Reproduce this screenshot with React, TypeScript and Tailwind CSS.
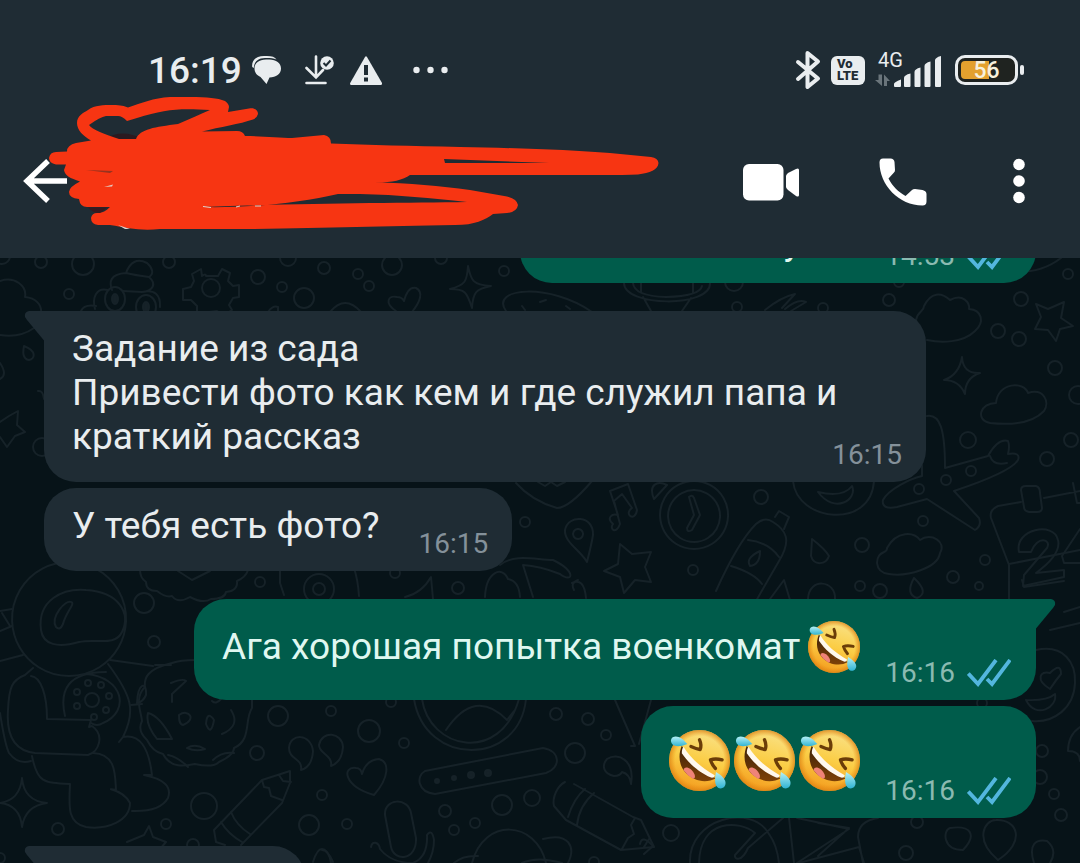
import React from "react";

const DOTS: [number, number, number][] = [
  [41, 262, 6], [83, 264, 11], [169, 262, 6], [69, 294, 5], [258, 277, 7], [282, 287, 5], [304, 298, 10],
  [288, 258, 8], [324, 268, 6], [358, 274, 5], [2, 256, 8], [42, 447, 9], [392, 265, 10], [441, 258, 6],
  [504, 271, 5], [369, 286, 5],
  [734, 282, 9], [737, 307, 5], [823, 308, 5], [889, 300, 6], [899, 282, 5], [1021, 299, 7], [1068, 274, 5],
  [998, 331, 7], [1019, 339, 7], [1055, 368, 7], [968, 440, 8], [1071, 440, 7], [1047, 459, 7],
  [761, 497, 7], [525, 522, 5], [693, 570, 5], [923, 521, 5], [862, 545, 7], [985, 560, 5], [953, 577, 6],
  [860, 586, 5], [880, 591, 7], [979, 586, 4], [971, 471, 5], [946, 480, 5], [919, 489, 5], [1078, 395, 9],
  [458, 588, 6], [395, 573, 5], [319, 589, 15], [319, 589, 6],
  [144, 603, 10], [154, 642, 6], [260, 582, 5], [278, 716, 10], [331, 711, 5], [257, 753, 7], [204, 806, 13],
  [322, 795, 5], [309, 825, 10], [347, 824, 5], [58, 829, 6], [166, 824, 5], [193, 845, 6], [0, 858, 5],
  [369, 731, 11], [391, 702, 5], [404, 743, 5], [556, 714, 6], [588, 719, 6], [606, 735, 5],
  [575, 753, 10], [532, 798, 8], [502, 805, 10], [445, 811, 6], [475, 823, 5], [454, 830, 5],
  [671, 833, 8], [594, 862, 5], [1042, 751, 6], [1040, 777, 7], [1054, 794, 5], [1061, 815, 6],
  [917, 822, 6], [906, 853, 7], [982, 703, 5],
];

const DOODLES = [
  // cloud, swirl and gear, top left
  "M0 281C15 276 27 286 25 297C36 298 42 305 41 313M0 335Q20 338 34 328",
  "M126 273C130 262 137 258 147 263C153 268 154 274 149 277C141 276 134 275 126 273C110 274 109 282 112 290M149 277C157 284 153 291 142 292L123 291M95 309C92 298 96 287 108 290M142 292Q161 288 160 307M81 311Q84 304 96 306",
  "M201 269l1 7q4-3 4 0c4 0 8 0 12 0l4-7 8 4-2 8 5 5 6-1v12l-6 1-4 7 3 5-8 5-7-4-8 1-4 5-8-4v-7l-6-6-8 0v-11l8-2 3-6-2-7z",
  "M24 346C37 351 35 359 29 360C22 359 23 351 24 346M0 363Q8 375 0 379M38 391q5-1 6 8M0 422L9 416L18 411L17 425L25 432L15 436L7 447L0 437",
  "M268 312q5-7 10-5v6M330 312Q345 294 361 312",
  // heart and sparkle
  "M396 311C384 303 388 295 397 297Q402 297 404 301Q408 286 416 288C424 292 420 302 412 312",
  "M468 266C471 280 472 285 491 286C476 289 473 292 472 308C467 292 465 289 450 289C465 285 467 282 468 266",
  "M506 311C489 287 551 283 592 312M522 306l3 4M540 302l6-2M566 306l4 3",
  // planter, fork
  "M624 283C624 307 711 308 710 283M633 283Q634 296 666 297Q700 296 702 286M643 297L651 311M691 298L682 311M641 283v9M693 283v10",
  "M765 310Q781 297 795 294L782 308M785 309Q798 298 806 302L791 311",
  // right side clouds, star, sparkle
  "M916 320C918 310 924 312 924 306C931 292 941 292 950 300C963 293 970 303 969 309C982 310 985 322 975 331C963 343 941 343 927 340",
  "M1036 304L1048 309L1064 302L1061 318L1073 326L1060 329L1056 341L1048 330L1035 329L1041 317Z",
  "M962 357Q963 374 980 373Q965 378 965 394Q959 380 944 380Q959 375 962 357",
  "M990 423C975 420 980 403 996 403C998 382 1024 381 1028 393C1044 388 1050 402 1044 411C1032 424 1009 425 990 423",
  "M1030 262l-12 10q25 0 43-14",
  // plane
  "M927 416C940 414 945 429 945 468L988 456Q998 438 1008 441Q1010 446 1008 454Q1021 452 1018 460Q1011 472 954 491L979 518Q982 526 975 530L927 499L897 507Q881 510 883 500C888 490 909 479 922 476V465M990 456q3 10 17 7",
  // calendar
  "M1080 491L1044 498M1021 502L998 506Q989 510 991 518L1009 565V600M1009 564L1080 550M1021 490q0-4 5-4h10q4 1 4 7l2 15q0 4-5 4h-8q-5-1-5-5zM1073 483l4 20h5",
  "M1019 552C1014 529 1054 521 1058 540C1061 552 1047 565 1036 573L1064 570V577L1023 586L1024 575L1047 548C1052 539 1037 535 1031 552ZM1080 529L1062 556L1064 563H1080",
  // smiley, heart, notes, alarm clock
  "M793 481C797 522 871 530 874 481M818 492Q843 498 852 486C858 499 835 515 818 492",
  "M516 483Q532 501 557 508Q569 508 592 481M538 482l7 4 6-4 6 4 8-4",
  "M613 524C606 518 612 513 618 515L610 491L628 484L637 510C635 523 623 514 632 508L622 494L614 501L620 524C616 535 609 529 613 524M654 499C648 485 657 480 667 485Z",
  "M694 481a34 34 0 1 0 .1 0M694 490a26 26 0 1 0 .1 0M689 497q3-3 5 1l6 17-8 15q-5 3-5-2l7-13z",
  // pin, star, bottle, drops
  "M587 562C580 550 564 542 565 530C568 514 594 515 593 535Q592 542 587 562M578 529a5 5 0 1 0 .1 0",
  "M620 544L632 554L651 552L645 567L651 582L635 580L624 593L620 577L604 571L618 564Z",
  "M716 591Q738 542 756 524Q765 516 773 522C786 530 792 540 779 561L756 601M748 540Q768 542 779 557M731 566Q754 573 762 584M775 517l4-6 10 6-5 12M750 566Q745 558 760 551Q760 565 750 566",
  "M812 539Q825 549 829 556C826 565 814 566 811 556ZM770 599l14-19 6 20M808 599C809 577 836 580 835 599M914 578Q930 593 917 598Q905 594 914 578",
  "M877 563C877 550 888 554 887 548C897 530 914 532 920 540C931 532 947 542 940 553C938 568 907 577 889 574Q878 573 877 563",
  // whale
  "M500 565C515 553 536 560 553 560C577 571 573 584 560 574Q540 566 523 565L533 597M485 597C486 572 502 565 508 579Q519 581 520 597M572 583q12-6 14 15M578 580q-8 3-4 10",
  // astronaut
  "M69 562a57 57 0 1 0 .1 0M41 630C37 600 63 588 86 590C119 592 131 613 122 632C115 647 96 638 79 642C58 648 43 645 41 630M56 627C50 617 66 599 71 602C76 603 66 612 63 624Q60 631 56 627",
  "M0 611l12-2M2 613l8 13M0 631l12-5M0 661l23-6M33 668L25 675C12 680 9 687 8 710C6 738 16 751 35 753L88 755C99 752 105 735 92 726L89 727L91 720L47 719C47 695 41 677 31 676M0 713Q5 745 9 753Q18 765 31 761",
  "M108 664C132 696 136 711 123 737L119 742M123 737Q147 732 152 775H144Q174 781 168 798Q160 812 132 811M106 672C68 672 59 690 65 716M86 674C123 677 131 711 103 723Q97 727 91 723M93 753C116 754 115 774 116 790C101 788 123 789 130 803C130 821 107 830 86 827C67 823 69 806 70 784C43 783 37 782 32 756",
  "M110 660L153 666M131 705L142 704",
  // flower badge and bitten donut
  "M140 570Q140 578 146 582Q146 591 157 591Q166 598 172 596Q178 604 190 597Q203 604 211 599Q225 599 226 592Q238 591 237 581Q246 577 248 570M178 571l14 9 18-9",
  "M172 663C146 669 144 679 145 687C134 698 141 711 142 721Q137 731 147 740Q153 752 163 754C171 769 185 766 195 764Q213 768 219 762Q234 755 234 748C252 740 244 720 252 708V698M172 663Q180 660 196 660",
  "M137 703C138 682 147 681 146 695Q143 702 137 703M155 665h16M148 713q12 3 24 26h-15Q145 724 148 713M179 715c10-7 18 5 4 10-4-1-4-6-4-10M206 724Q207 710 214 720Q211 737 206 724M231 710q10 16-9 24M187 748Q195 743 205 749Q196 752 187 748M171 683q12-5 15-2l-14 13v8M168 755q10 2 20 12M213 760q9-9 21-7M212 701q4 4 9-2",
  // lower left sparkle, pencil, quotes, heart
  "M22 778Q24 801 47 803Q25 806 22 827Q20 805 0 803Q20 800 22 778",
  "M262 780L290 771V783L282 803L241 845M262 780L214 830L216 842L225 845M262 780L264 787L269 788L271 796L282 800M231 812Q236 825 250 834M221 822Q228 834 242 842M279 775l4 6 8 1",
  "M301 770C303 758 289 760 289 748C290 733 311 733 313 751Q312 767 301 770M331 766C333 755 319 754 319 745C322 730 342 732 343 747Q342 762 331 766",
  "M374 795C343 786 342 766 356 768Q361 768 362 774Q366 760 379 759C390 762 389 778 374 795",
  "M127 842L144 835L149 826L153 837L166 842L160 849M313 862q8-26 20 0",
  // compass and remote
  "M414 699C425 767 519 767 526 699M422 699C429 749 500 765 519 699M446 730Q475 687 507 720M507 720L514 711",
  "M425 771L543 748C561 751 561 768 546 773L435 794C417 792 416 776 425 771M615 700l20 46h-4M651 700l-12 44",
  "M631 784C635 760 618 752 607 759C601 766 604 774 614 776Q620 776 622 772Q630 774 631 784",
  // microphone
  "M385 815C384 798 408 797 411 813L416 838C417 861 394 862 391 847ZM371 847C372 840 379 842 380 849Q391 863 413 863Q428 857 427 835Q432 828 434 840Q434 852 428 863M322 850q7 0 9 13",
  // crayon, hat
  "M565 782C557 786 552 798 554 806L566 820L621 850L654 847L641 820L633 817L574 784M622 849L628 838L634 834L631 825L635 818M644 847l5-8M585 789Q574 798 568 817M594 793Q579 806 577 825",
  "M472 863C484 817 536 820 546 863M454 863q9-8 24-7M522 863q15-7 40 0M543 839C569 832 576 847 568 863",
  // bike, cube
  "M690 863C688 818 752 803 769 834Q777 845 779 863M699 863C700 818 740 820 755 833L735 855C734 860 742 862 748 848L783 818M789 818l5 45M797 818L849 829L797 863M799 863L859 847L864 863M818 823l31 5-31 28M878 818q-20 3-20 19l5 26",
  "M963 850C942 850 943 830 950 828C970 825 978 834 963 850M998 860C974 840 984 820 996 820C1018 819 1026 842 998 860M1034 863C1028 844 1036 839 1047 841Q1058 850 1050 863M1080 727q-12 8-12 24 12 0 12 10",
  // love smiley
  "M1036 650C1064 644 1076 663 1075 683C1074 708 1054 723 1032 721M1050 689C1035 680 1040 670 1050 673Q1061 662 1061 674Q1056 680 1050 689M1026 700Q1047 701 1055 694C1058 707 1036 720 1026 700",
  "M1009 581v16M1022 580l2 7 40-6M1064 612l16-5M1050 630l30-7M640 844q2-10 13 2l-9 8",
  "M280 568v15l4 12M354 568q4 12 5 28M405 597q17-4 26-20l2 22",
];

function Wallpaper() {
  return (
    <svg
      className="absolute top-0 left-0 h-[605px] w-[1080px]"
      viewBox="0 258 1080 605"
      fill="none"
      stroke="#162228"
      strokeWidth="2"
      strokeLinecap="round"
      strokeLinejoin="round"
      aria-hidden="true"
    >
      {DOODLES.map((d, i) => (
        <path key={i} d={d} />
      ))}
      {DOTS.map(([x, y, r], i) => (
        <circle key={i} cx={x} cy={y} r={r} />
      ))}
      <circle cx="211" cy="288" r="9" />
      <ellipse cx="115" cy="299" rx="10" ry="12" />
      <ellipse cx="146" cy="307" rx="10" ry="12" />
      <g fill="#162228">
        <ellipse cx="115" cy="299" rx="3" ry="5" />
        <ellipse cx="146" cy="307" rx="3" ry="5" />
        <circle cx="437" cy="781" r="2" />
        <circle cx="454" cy="778" r="2" />
        <circle cx="471" cy="775" r="3" />
        <circle cx="488" cy="773" r="3" />
      </g>
      <circle cx="92" cy="700" r="7" />
      {[[77, 692], [88, 683], [101, 685], [109, 696], [106, 710], [94, 717], [77, 706]].map(([x, y]) => (
        <circle key={x + "-" + y} cx={x} cy={y} r="3" />
      ))}
    </svg>
  );
}

function Ticks() {
  return (
    <svg className="h-7 w-11 shrink-0" viewBox="0 0 44 28" fill="none" stroke="#53b6de" strokeWidth="3.8" role="img" aria-label="Прочитано">
      <path d="M1.300 14.500L11 25L29 1" />
      <path d="M20 20L25 25L43 1" />
    </svg>
  );
}

function Laugh({ className }: { className: string }) {
  return (
    <svg className={className} viewBox="0 0 100 100" role="img" aria-label="🤣">
      <defs>
        <linearGradient id="face" x1="0.65" y1="0" x2="0.35" y2="1">
          <stop offset="0" stopColor="#f9e287" />
          <stop offset="0.5" stopColor="#fbcd45" />
          <stop offset="1" stopColor="#f39a1d" />
        </linearGradient>
        <radialGradient id="rim" cx="0.5" cy="0.5" r="0.5">
          <stop offset="0.8" stopColor="#e88a10" stopOpacity="0" />
          <stop offset="1" stopColor="#d97f13" stopOpacity="0.75" />
        </radialGradient>
        <linearGradient id="tear" x1="0" y1="0" x2="0" y2="1">
          <stop offset="0" stopColor="#b5f0f5" />
          <stop offset="1" stopColor="#30b4d3" />
        </linearGradient>
        <linearGradient id="mouth" x1="0" y1="0" x2="0" y2="1">
          <stop offset="0" stopColor="#3e2208" />
          <stop offset="1" stopColor="#7d4108" />
        </linearGradient>
      </defs>
      <circle cx="50" cy="50" r="50" fill="url(#face)" />
      <circle cx="50" cy="50" r="50" fill="url(#rim)" />
      <path d="M21 26C14 42 17 60 28 71C41 84 61 88 77 79C56 71 37 52 21 26Z" fill="url(#mouth)" />
      <path d="M24 66C24 58 37 61 42 73Q44 80 39 80Q30 75 24 66Z" fill="#ef8378" />
      <path d="M24 28C35 46 53 62 75 74Q74 79 69 78C49 70 32 54 21 38Q21 30 24 28Z" fill="#fff8ed" />
      <path d="M36 27Q45 31 51 32Q54 25 50 16" fill="none" stroke="#6b3d08" strokeWidth="5.500" strokeLinecap="round" strokeLinejoin="round" />
      <path d="M87 49Q76 46 68 49Q70 56 76 63" fill="none" stroke="#6b3d08" strokeWidth="5.500" strokeLinecap="round" strokeLinejoin="round" />
      <path d="M30 23C22 13 13 8 6 12C1 16 3 24 10 26Q18 28 30 23Z" fill="url(#tear)" />
      <path d="M77 69C75 80 74 91 81 95C88 98 95 91 92 83Q88 75 77 69Z" fill="url(#tear)" />
    </svg>
  );
}

function Tail({ side }: { side: "in" | "out" }) {
  return side === "in" ? (
    <svg className="absolute top-0 right-full h-[30px] w-5" viewBox="0 0 20 30" fill="#1f2c34" aria-hidden="true">
      <path d="M20 0H5Q0 1 1 6L3 9L20 29.500Z" />
    </svg>
  ) : (
    <svg className="absolute top-0 left-full h-[30px] w-5" viewBox="0 0 20 30" fill="#005c4b" aria-hidden="true">
      <path d="M0 0H15Q20 1 19 6L17 9L0 29.500Z" />
    </svg>
  );
}

function Meta({ time, read }: { time: string; read?: boolean }) {
  return (
    <span className={read ? "flex items-center gap-3 text-[28px] leading-8 text-[#8bbab1]" : "text-[28px] leading-8 text-[#84919a]"}>
      <time>{time}</time>
      {read && <Ticks />}
    </span>
  );
}

const INCOMING = "relative flex items-end self-start rounded-[32px] bg-[#1f2c34] pr-6 pb-[11px] pl-7 text-[#e9edef]";
const OUTGOING = "relative flex items-end self-end rounded-[32px] bg-[#005c4b] pr-[25px] pb-[11px] pl-7 text-[#dff7f0]";

function Signal() {
  return (
    <svg className="h-[50px] w-[67px]" viewBox="0 -8 67 50" fill="#e9edef" role="img" aria-label="4G">
      <text x="3" y="14" fontSize="20" fontFamily="Roboto, sans-serif">4G</text>
      <path d="M0 27h3.500v-5.500h3.500V33zM9 33V21.500l6 6.500h-3v5z" fill="#6a757b" />
      <path d="M19 33v-2q0-2 7-4.500V33q0 1-1 1h-5q-1 0-1-1zM29 33v-8q0-3 6.500-4.500V33q0 1-1 1h-4.500q-1 0-1-1zM39.500 33V19q0-3 6-4.500V33q0 1-1 1h-4q-1 0-1-1zM49.500 33V13q0-3 6-4.500V33q0 1-1 1h-4q-1 0-1-1zM60 33V7.500q0-3 6-4.500V33q0 1-1 1H61q-1 0-1-1z" />
    </svg>
  );
}

function StatusBar() {
  return (
    <div className="flex h-[60px] items-center justify-between pr-14 pl-[148px] text-[#e9edef]">
      <div className="flex items-center">
        <time className="pt-0.5 text-[37px] leading-10 font-medium">16:19</time>
        <svg className="ml-2.5 h-7 w-[29px]" viewBox="0 0 29 28" fill="#e9edef" aria-hidden="true">
          <path d="M.2 11C-.5 4 4 0 12 0h3c5 0 8 1 9.500 3.500C21 1.800 17 2 13 2 6 2 2 6 1.800 12z" />
          <path d="M14 3.500h3.500C24 3.500 29 7 29 12.500S24 21.500 17.500 21.500L14.500 28l-6-7C5 19.500 2.500 16.500 2.500 12.500 2.500 7 7 3.500 14 3.500z" />
        </svg>
        <svg className="ml-6 h-[30px] w-[29px]" viewBox="0 0 29 30" fill="none" stroke="#e9edef" strokeWidth="2.600" aria-hidden="true">
          <path d="M11 1.500V22M1.500 13l9.500 9.500 7-7.500M1.500 28h19" strokeLinecap="round" />
          <circle cx="22" cy="8" r="6.800" fill="#e9edef" stroke="none" />
          <path d="M18.500 8l2.500 2.500 4.500-5" stroke="#1f2c34" strokeWidth="2" />
        </svg>
        <svg className="ml-4 h-[29px] w-8" viewBox="0 0 32 29" aria-hidden="true">
          <path d="M15 1q1-1.500 2 0l15 26q.5 2-1.500 2h-29Q-.5 29 .2 27z" fill="#e9edef" />
          <path d="M14 9h4v10h-4zM14 21.500h4v4h-4z" fill="#1f2c34" />
        </svg>
        <svg className="ml-[31px] h-2 w-[35px]" viewBox="0 0 35 8" fill="#e9edef" aria-hidden="true">
          <circle cx="3.500" cy="4" r="3.200" />
          <circle cx="17.500" cy="4" r="3.200" />
          <circle cx="31.500" cy="4" r="3.200" />
        </svg>
      </div>
      <div className="flex items-center">
        <svg className="h-10 w-[26px]" viewBox="0 0 26 40" fill="none" stroke="#e9edef" strokeWidth="4" strokeLinejoin="round" strokeLinecap="round" aria-hidden="true">
          <path d="M3 12L23 28.500L12.500 37V3L23 11.500L3 29" />
        </svg>
        <div className="ml-2.5 flex h-[29px] w-[34px] flex-col justify-center rounded-md bg-[#e9edef] pl-1.5 text-[13px] leading-3 font-black text-[#1f2c34]">
          <span>Vo</span>
          <span>LTE</span>
        </div>
        <div className="ml-2.5">
          <Signal />
        </div>
        <div className="ml-[13px] flex h-[30px] w-[63px] items-center rounded-[10px] border-3 border-[#e9edef] bg-[#1f2320] p-[3px]">
          <div className="relative flex h-full w-full items-center justify-center">
            <div className="absolute inset-y-0 left-0 w-7 rounded-l-sm bg-[#e3a02e]" />
            <span className="relative pt-0.5 text-[23px] leading-5 font-medium text-[#f6f0dc]">56</span>
          </div>
        </div>
        <div className="ml-0.5 h-2.5 w-1 rounded-sm bg-[#e9edef]" />
      </div>
    </div>
  );
}

function Scribble() {
  return (
    <svg className="pointer-events-none absolute top-0 left-0 h-[258px] w-[680px]" viewBox="0 0 680 258" aria-hidden="true">
      <path d="M104 139Q123 128 142 139Z" fill="#2b1a20" />
      <path
        fill="#f73512"
        fillRule="evenodd"
        d="M77 123C77 116 83 113 88 110C95 105 103 105 113 105C121 105 124 106 128 107.500C142 103 153 98 170 97H190C208 97 217 98 225 101Q229 104 229 107L228 112L249 108.500C255 107 258 111 258 114Q257 118 253 119.500C240 124 220 127 202 131.500L237 131Q243 131 245 136C260 136 280 138 292 138L324 135Q331 136 331 143.500C370 145 410 146 460 147C520 148 570 150 610 153L651 157Q658 158 658.500 163C658 170 650 173 638 174.500Q625 175 600 175H410Q399 183 374 182.500C410 183 440 186 470 190L507 196.500Q517 199 518 205Q517 212 507 213L493 214C485 220 475 225 455 225C380 226 330 228 250 229H160C140 231 128 228 110 225H98Q91 224 91 218Q92 213 97 213C103 213 107 210 110 207H87Q80 207 79 199Q69 198 69 192Q69 187 80 181.500C70 178 65 176 64 170L66 164.500H56Q49 163 49 158Q50 152 56 152L67 151.500Q67 145 76 143L91 140.500C83 136 77 130 77 123ZM89 125C92 130 105 134 119 139H136C140 129 155 127 178 124C190 119 200 114 210 110C180 108 165 109 137 118L127 121Q122 116 118 116H106Q100 117 89 125ZM444 159L445 163H549ZM203 207C250 208 300 203 338 194L360 194C400 195 430 198 467 202C400 203 300 203 203 207Z"
      />
      <path d="M86 170L113 171L110 173Z" fill="#97331f" />
      <path d="M104 187L113 184.500L112 186.500Z" fill="#e4c9bf" />
      <path d="M88 207.500H107L100 213Q93 213 88 207.500Z" fill="#38191f" />
      <path d="M118 225L130 229H125Z" fill="#ded3cf" />
      <path d="M203 206.500l8 1M236 207l4-1M255 206h6" stroke="#e4d3cd" />
    </svg>
  );
}

function Header() {
  return (
    <header className="relative z-10 shrink-0 bg-[#1f2c34] pt-10">
      <StatusBar />
      <div className="flex h-[158px] items-center justify-between pt-1 pr-[55px] pl-[23px]">
        <button type="button" aria-label="Назад">
          <svg className="h-11 w-[45px]" viewBox="0 0 45 44" fill="none" stroke="#fff" strokeWidth="5.400">
            <path d="M25 2L4 22L25 42M3 22H44" />
          </svg>
        </button>
        <div className="flex items-center">
          <button type="button" aria-label="Видеозвонок">
            <svg className="h-10 w-14" viewBox="0 0 56 40" fill="#fff">
              <rect x="0" y="3" width="40.500" height="36.500" rx="6" />
              <path d="M43 15q0-1 2-3l8-4q3-1.500 3 1v25q0 2.500-3 1l-8-6q-2-2-2-3z" />
            </svg>
          </button>
          <button type="button" className="ml-20" aria-label="Позвонить">
            <svg className="h-[50px] w-12" viewBox="0 -2 48 50" fill="#fff">
              <path d="M4 .5H11.500Q15 .5 15.500 4L16 12Q16 13.500 15 14.500L9.500 20.500C14 29 19 33.500 26.500 38L33 32Q34 31 36 31L43.500 32Q47.500 33 47.500 36V43.500Q47.500 47.500 43.500 47.500C20 47.500.5 27 .5 4.500Q.5.5 4 .5Z" />
            </svg>
          </button>
          <button type="button" className="ml-[86px]" aria-label="Ещё">
            <svg className="h-12 w-3" viewBox="0 0 12 48" fill="#fff">
              <circle cx="6" cy="7.500" r="5.800" />
              <circle cx="6" cy="24" r="5.800" />
              <circle cx="6" cy="40.500" r="5.800" />
            </svg>
          </button>
        </div>
      </div>
      <Scribble />
    </header>
  );
}

export default function App() {
  return (
    <div className="flex h-screen flex-col overflow-hidden bg-[#071318] font-[Roboto,sans-serif]">
      <Header />
      <main className="relative flex-1 overflow-hidden">
        <Wallpaper />
        <div className="relative flex flex-col px-11 text-[37px] leading-[44px]">
          <div className={OUTGOING + " -mt-[54px] w-[516px] justify-end pt-4"}>
            <p className="mr-[84px] mb-2">у</p>
            <Meta time="14:53" read />
          </div>

          <div className={INCOMING + " mt-7 w-[882px] max-w-full justify-between rounded-tl-none pt-4"}>
            <Tail side="in" />
            <p className="mb-3 min-w-0 whitespace-nowrap">
              Задание из сада
              <br />
              Привести фото как кем и где служил папа и
              <br />
              краткий рассказ
            </p>
            <Meta time="16:15" />
          </div>

          <div className={INCOMING + " mt-1.5 gap-[39px] pt-4"}>
            <p className="mb-3">У тебя есть фото?</p>
            <Meta time="16:15" />
          </div>

          <div className={OUTGOING + " mt-7 gap-[25px] rounded-tr-none pt-[22px]"}>
            <Tail side="out" />
            <p className="mb-4 flex items-center gap-2">
              Ага хорошая попытка военкомат
              <Laugh className="h-[52px] w-[52px]" />
            </p>
            <Meta time="16:16" read />
          </div>

          <div className={OUTGOING + " mt-1.5 gap-[25px] pt-6"}>
            <p className="mb-4 flex gap-1">
              <Laugh className="h-[61px] w-[61px]" />
              <Laugh className="h-[61px] w-[61px]" />
              <Laugh className="h-[61px] w-[61px]" />
            </p>
            <Meta time="16:16" read />
          </div>

          <div className={INCOMING + " mt-7 h-20 w-[261px] rounded-tl-none"}>
            <Tail side="in" />
          </div>
        </div>
      </main>
    </div>
  );
}
